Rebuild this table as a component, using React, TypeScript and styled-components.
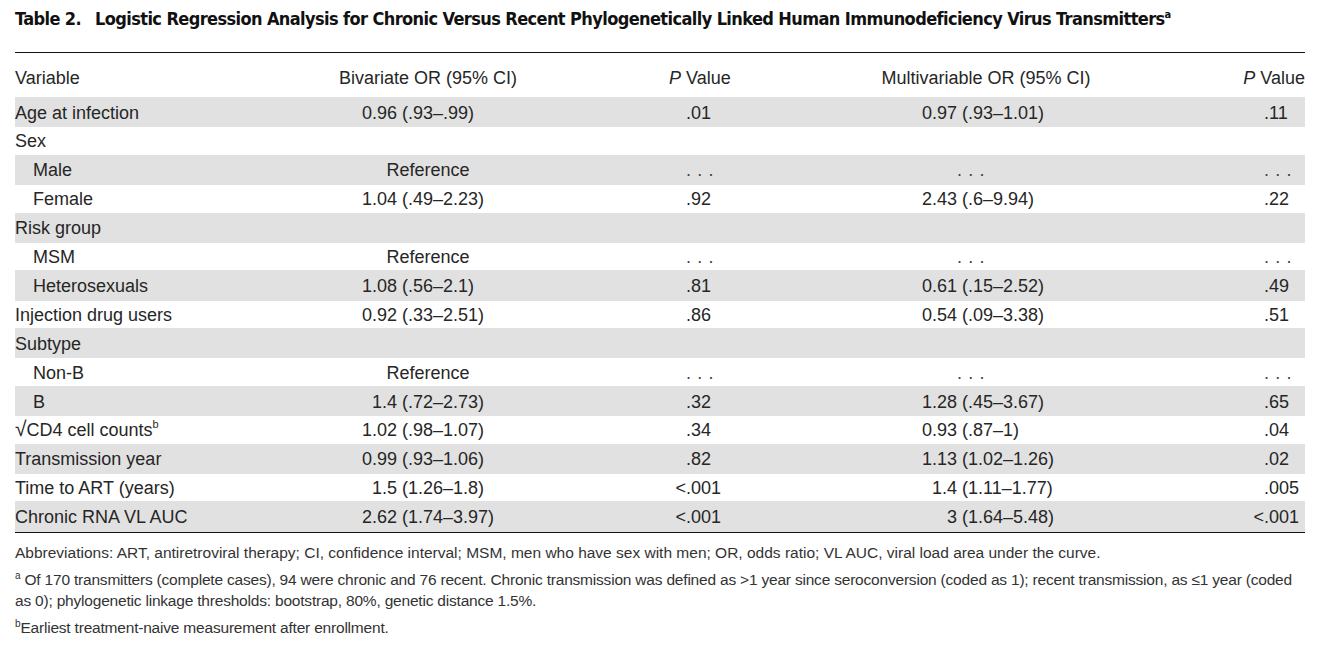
import React from 'react'
import styled, { createGlobalStyle } from 'styled-components'

const GlobalStyle = createGlobalStyle`
  html, body {
    margin: 0;
    padding: 0;
    background: #ffffff;
  }
  body {
    font-family: 'Liberation Sans', Arial, Helvetica, sans-serif;
    color: #262626;
  }
`

const Page = styled.main`
  width: 1290px;
  padding: 8px 0 0 15px;
`

const Title = styled.h1`
  margin: 0;
  display: flex;
  gap: 14px;
  font-family: 'Liberation Sans Narrow', 'DejaVu Sans Condensed', 'Liberation Sans', sans-serif;
  font-weight: bold;
  font-size: 18px;
  letter-spacing: -0.6px;
  line-height: 22px;
  color: #111;
  white-space: nowrap;
`

const TableNo = styled.span`
  flex: none;
`

const TitleSup = styled.sup`
  font-size: 11px;
  line-height: 0;
  vertical-align: 7px;
  letter-spacing: 0;
`

const Table = styled.section`
  margin-top: 22px;
  border-top: 1.5px solid #111;
  border-bottom: 1.5px solid #111;
  font-size: 18px;
`

const HeadRow = styled.div`
  display: grid;
  grid-template-columns: 285px 256px 244px 372px 133px;
  align-items: center;
  height: 44px;
  padding-top: 6px;
  box-sizing: border-box;
`

const BodyRow = styled.div<{ $shade?: boolean }>`
  display: grid;
  grid-template-columns: 285px 256px 244px 372px 133px;
  align-items: center;
  height: ${(p) => (p.$shade ? '30.2px' : '27.6px')};
  padding-top: 2px;
  box-sizing: border-box;
  background: ${(p) => (p.$shade ? '#e1e1e1' : 'transparent')};
`

const Cell = styled.div<{ $indent?: boolean }>`
  white-space: nowrap;
  padding-left: ${(p) => (p.$indent ? '18px' : '0')};
`

const HeadCenter = styled.div`
  text-align: center;
  white-space: nowrap;
`

const HeadP = styled.div<{ $pad: number }>`
  padding-left: ${(p) => p.$pad}px;
  white-space: nowrap;
`

const HeadRight = styled.div`
  text-align: right;
  white-space: nowrap;
`

const Lead = styled.span<{ $w: number }>`
  display: inline-block;
  width: ${(p) => p.$w}px;
  text-align: right;
`

const Rest = styled.span<{ $gap: number }>`
  margin-left: ${(p) => p.$gap}px;
`

const RefText = styled.span`
  display: block;
  text-align: center;
`

const Dots = styled.span`
  letter-spacing: 0.6px;
  color: #444;
`

const Root = styled.span`
  font-size: 21px;
  line-height: 0;
`

const Sup = styled.sup`
  font-size: 11px;
  line-height: 0;
  vertical-align: 8px;
`

const Notes = styled.footer`
  padding-top: 9px;
  font-size: 15.5px;
  color: #333;
`

const Note = styled.p<{ $tight?: boolean }>`
  margin: 0 0 6px;
  line-height: 21px;
  letter-spacing: ${(p) => (p.$tight ? '-0.2px' : '0')};
`

const NoteSup = styled.sup`
  font-size: 10px;
  line-height: 0;
`

type Value = [string, string] | 'ref' | 'dots'

type Row = {
  label: React.ReactNode;
  indent?: boolean;
  biv?: Value;
  p1?: Value;
  multi?: Value;
  p2?: Value;
}

const rows: Row[] = [
  { label: 'Age at infection', biv: ['0.96', '(.93–.99)'], p1: ['', '.01'], multi: ['0.97', '(.93–1.01)'], p2: ['', '.11'] },
  { label: 'Sex' },
  { label: 'Male', indent: true, biv: 'ref', p1: 'dots', multi: 'dots', p2: 'dots' },
  { label: 'Female', indent: true, biv: ['1.04', '(.49–2.23)'], p1: ['', '.92'], multi: ['2.43', '(.6–9.94)'], p2: ['', '.22'] },
  { label: 'Risk group' },
  { label: 'MSM', indent: true, biv: 'ref', p1: 'dots', multi: 'dots', p2: 'dots' },
  { label: 'Heterosexuals', indent: true, biv: ['1.08', '(.56–2.1)'], p1: ['', '.81'], multi: ['0.61', '(.15–2.52)'], p2: ['', '.49'] },
  { label: 'Injection drug users', biv: ['0.92', '(.33–2.51)'], p1: ['', '.86'], multi: ['0.54', '(.09–3.38)'], p2: ['', '.51'] },
  { label: 'Subtype' },
  { label: 'Non-B', indent: true, biv: 'ref', p1: 'dots', multi: 'dots', p2: 'dots' },
  { label: 'B', indent: true, biv: ['1.4', '(.72–2.73)'], p1: ['', '.32'], multi: ['1.28', '(.45–3.67)'], p2: ['', '.65'] },
  {
    label: (
      <span>
        <Root>√</Root>CD4 cell counts<Sup>b</Sup>
      </span>
    ),
    biv: ['1.02', '(.98–1.07)'], p1: ['', '.34'], multi: ['0.93', '(.87–1)'], p2: ['', '.04'],
  },
  { label: 'Transmission year', biv: ['0.99', '(.93–1.06)'], p1: ['', '.82'], multi: ['1.13', '(1.02–1.26)'], p2: ['', '.02'] },
  { label: 'Time to ART (years)', biv: ['1.5', '(1.26–1.8)'], p1: ['<', '.001'], multi: ['1.4', '(1.11–1.77)'], p2: ['', '.005'] },
  { label: 'Chronic RNA VL AUC', biv: ['2.62', '(1.74–3.97)'], p1: ['<', '.001'], multi: ['3', '(1.64–5.48)'], p2: ['<', '.001'] },
]

const Estimate: React.FC<{ value?: Value; lead: number }> = ({ value, lead }) => {
  if (!value) return null
  if (value === 'ref') return <RefText>Reference</RefText>
  if (value === 'dots') {
    return (
      <>
        <Lead $w={lead} />
        <Dots>. . .</Dots>
      </>
    )
  }
  return (
    <>
      <Lead $w={lead}>{value[0]}</Lead>
      <Rest $gap={value[0] && value[1].startsWith('(') ? 5 : 0}>{value[1]}</Rest>
    </>
  )
}

export default function App() {
  return (
    <Page>
      <GlobalStyle />
      <Title>
        <TableNo>Table 2.</TableNo>
        <span>
          Logistic Regression Analysis for Chronic Versus Recent Phylogenetically Linked Human Immunodeficiency
          Virus Transmitters<TitleSup>a</TitleSup>
        </span>
      </Title>
      <Table>
        <HeadRow>
          <Cell>Variable</Cell>
          <HeadCenter>Bivariate OR (95% CI)</HeadCenter>
          <HeadP $pad={113}>
            <i>P</i> Value
          </HeadP>
          <HeadCenter>Multivariable OR (95% CI)</HeadCenter>
          <HeadRight>
            <i>P</i> Value
          </HeadRight>
        </HeadRow>
        {rows.map((r, i) => (
          <BodyRow key={i} $shade={i % 2 === 0}>
            <Cell $indent={r.indent}>{r.label}</Cell>
            <Cell>
              <Estimate value={r.biv} lead={97} />
            </Cell>
            <Cell>
              <Estimate value={r.p1} lead={130} />
            </Cell>
            <Cell>
              <Estimate value={r.multi} lead={157} />
            </Cell>
            <Cell>
              <Estimate value={r.p2} lead={92} />
            </Cell>
          </BodyRow>
        ))}
      </Table>
      <Notes>
        <Note>
          Abbreviations: ART, antiretroviral therapy; CI, confidence interval; MSM, men who have sex with men; OR,
          odds ratio; VL AUC, viral load area under the curve.
        </Note>
        <Note $tight>
          <NoteSup>a</NoteSup> Of 170 transmitters (complete cases), 94 were chronic and 76 recent. Chronic transmission
          was defined as &gt;1 year since seroconversion (coded as 1); recent transmission, as ≤1 year (coded
          as 0); phylogenetic linkage thresholds: bootstrap, 80%, genetic distance 1.5%.
        </Note>
        <Note $tight>
          <NoteSup>b</NoteSup>Earliest treatment-naive measurement after enrollment.
        </Note>
      </Notes>
    </Page>
  )
}
